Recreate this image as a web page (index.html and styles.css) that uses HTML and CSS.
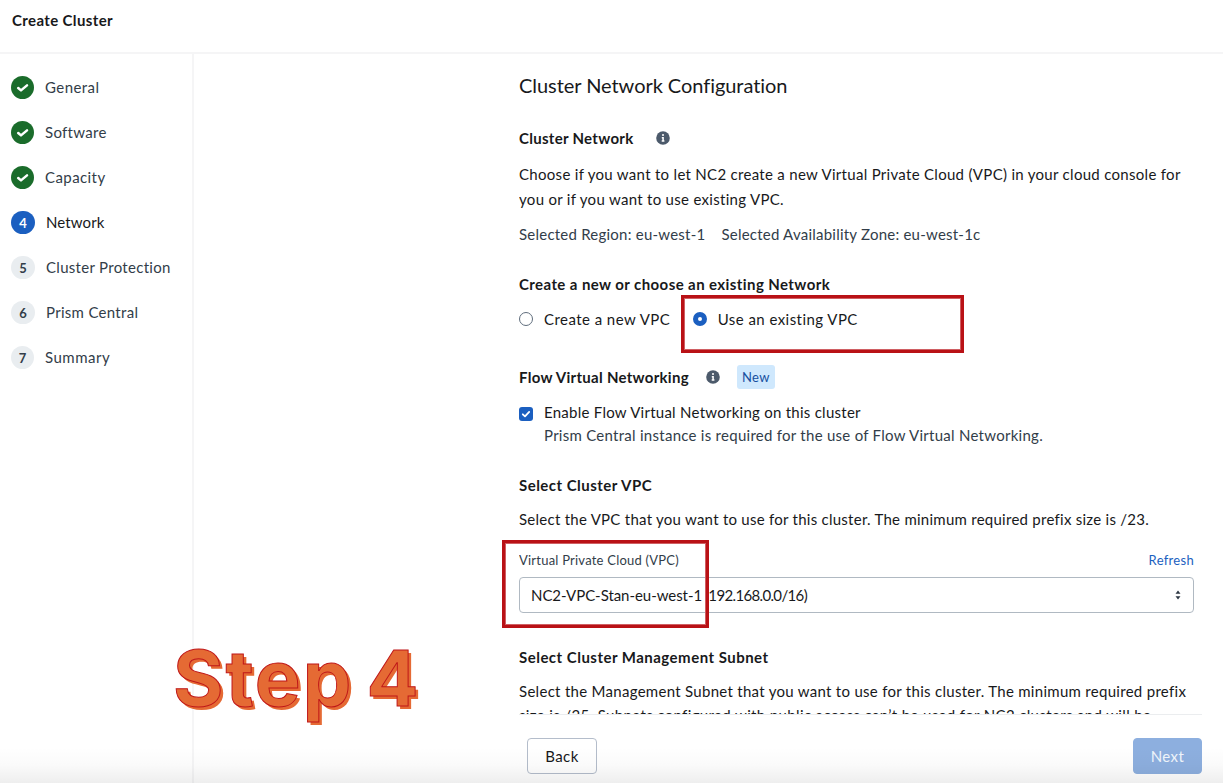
FILE: index.html
```html
<!DOCTYPE html>
<html lang="en">
<head>
<meta charset="utf-8">
<title>Create Cluster</title>
<link rel="stylesheet" href="styles.css">
</head>
<body>
<div class="app">
  <header class="topbar"><span class="t-create">Create Cluster</span></header>
  <div class="body">
    <nav class="steps">
      <div class="step"><span class="dot done"><svg width="23" height="23" viewBox="0 0 23 23"><path d="M7.2 12l2.8 2.4 6-5" fill="none" stroke="#fff" stroke-width="2.5" stroke-linecap="round" stroke-linejoin="round"/></svg></span><span class="label s1">General</span></div>
      <div class="step"><span class="dot done"><svg width="23" height="23" viewBox="0 0 23 23"><path d="M7.2 12l2.8 2.4 6-5" fill="none" stroke="#fff" stroke-width="2.5" stroke-linecap="round" stroke-linejoin="round"/></svg></span><span class="label">Software</span></div>
      <div class="step"><span class="dot done"><svg width="23" height="23" viewBox="0 0 23 23"><path d="M7.2 12l2.8 2.4 6-5" fill="none" stroke="#fff" stroke-width="2.5" stroke-linecap="round" stroke-linejoin="round"/></svg></span><span class="label s1">Capacity</span></div>
      <div class="step current"><span class="dot wide">4</span><span class="label s4">Network</span></div>
      <div class="step"><span class="dot wide">5</span><span class="label">Cluster Protection</span></div>
      <div class="step"><span class="dot wide">6</span><span class="label">Prism Central</span></div>
      <div class="step"><span class="dot">7</span><span class="label s7">Summary</span></div>
    </nav>
    <main class="main">
      <div class="scroll">
        <h1 class="title">Cluster Network Configuration</h1>
        <div class="row head-network"><h2>Cluster Network</h2>
          <svg class="info" width="14" height="14" viewBox="0 0 14 14"><circle cx="7" cy="7" r="6.8" fill="#4c5a6b"/><path d="M7 3.1v1.9M5.8 6.8H7.1v3.1M5.7 10.1h2.7" fill="none" stroke="#fff" stroke-width="1.5"/></svg>
        </div>
        <p class="intro"><span class="i1">Choose if you want to let NC2 create a new Virtual Private Cloud (VPC) in your cloud console for</span><br><span class="i2">you or if you want to use existing VPC.</span></p>
        <div class="region"><span class="r1">Selected Region: eu-west-1</span><span class="r2">Selected Availability Zone: eu-west-1c</span></div>
        <h2 class="head-choose">Create a new or choose an existing Network</h2>
        <div class="radios">
          <span class="radio"></span><span class="option">Create a new VPC</span>
          <span class="radio on"></span><span class="option">Use an existing VPC</span>
        </div>
        <div class="row head-flow"><h2>Flow Virtual Networking</h2>
          <svg class="info" width="14" height="14" viewBox="0 0 14 14"><circle cx="7" cy="7" r="6.8" fill="#4c5a6b"/><path d="M7 3.1v1.9M5.8 6.8H7.1v3.1M5.7 10.1h2.7" fill="none" stroke="#fff" stroke-width="1.5"/></svg>
          <span class="tag">New</span>
        </div>
        <div class="check">
          <svg class="box" width="14" height="14" viewBox="0 0 14 14"><rect width="14" height="14" rx="3" fill="#1b5fc0"/><path d="M3.8 7.3l2.2 2.1 4.2-4.5" fill="none" stroke="#fff" stroke-width="1.8" stroke-linecap="round" stroke-linejoin="round"/></svg>
          <div><div class="c1">Enable Flow Virtual Networking on this cluster</div><div class="c2">Prism Central instance is required for the use of Flow Virtual Networking.</div></div>
        </div>
        <h2 class="head-vpc">Select Cluster VPC</h2>
        <p class="vpc-text">Select the VPC that you want to use for this cluster. The minimum required prefix size is /23.</p>
        <div class="labels"><span class="l1">Virtual Private Cloud (VPC)</span><a class="refresh">Refresh</a></div>
        <div class="select"><span class="v1">NC2-VPC-Stan-eu-west-1</span><span class="v2">(192.168.0.0/16)</span>
          <svg class="sort" width="6" height="10" viewBox="0 0 6 10"><path d="M3 .4L5.5 3.8H.5zM3 9.6L5.5 6.2H.5z" fill="#2d3743"/></svg>
        </div>
        <h2 class="head-subnet">Select Cluster Management Subnet</h2>
        <p class="subnet"><span class="m1">Select the Management Subnet that you want to use for this cluster. The minimum required prefix</span><br><span class="m2">size is /25. Subnets configured with public access can’t be used for NC2 clusters and will be</span></p>
      </div>
      <footer class="footer"><button class="btn">Back</button><button class="btn primary">Next</button></footer>
    </main>
  </div>
  <div class="fade"></div>
  <div class="mark mark-radio"></div>
  <div class="mark mark-select"></div>
  <div class="callout">Step 4</div>
</div>
</body>
</html>
```
FILE: styles.css
```css
* { box-sizing: border-box; }
body { margin: 0; background: #fff; }
h1, h2, p { margin: 0; }
.app {
  position: relative;
  width: 1223px;
  height: 783px;
  display: flex;
  flex-direction: column;
  overflow: hidden;
  font: 400 15px/20px Lato, "Open Sans", sans-serif;
  letter-spacing: .3px;
  color: #18191b;
  white-space: nowrap;
}
.topbar { height: 54px; padding: 10px 12px; border-bottom: 2px solid #f5f5f6; font-weight: 700; letter-spacing: .37px; }
.body { flex: 1; display: flex; min-height: 0; }
.steps { width: 194px; border-right: 2px solid #f5f5f6; padding: 11px 0 0 11px; color: #323d49; }
.step { height: 45px; display: flex; align-items: center; gap: 11px; }
.label { padding-bottom: 2px; }
.s1 { letter-spacing: .42px; }
.s4 { letter-spacing: .1px; }
.s7 { letter-spacing: .5px; }
.step.current { color: #18191b; }
.dot { width: 23px; height: 23px; border-radius: 12px; background: #e9edf0; display: flex; align-items: center; justify-content: center; font-size: 13px; font-weight: 700; letter-spacing: 0; }
.dot.wide { width: 24px; }
.dot.done { background: #1a6c2b; }
.current .dot { background: #1b5fc0; color: #fff; }
.main { flex: 1; display: flex; flex-direction: column; padding: 0 21px 0 325px; }
.scroll { height: 660px; padding: 16px 8px 0 0; overflow: hidden; }
.title { font-size: 20px; line-height: 30px; font-weight: 400; letter-spacing: -.05px; }
h2 { font-size: 15px; line-height: 20px; font-weight: 700; }
.row { display: flex; align-items: center; }
.head-network { margin-top: 27px; gap: 22px; height: 22px; }
.head-network h2 { letter-spacing: .29px; }
.intro { margin-top: 13px; line-height: 24.5px; }
.region { margin-top: 13px; display: flex; gap: 16px; color: #323d49; letter-spacing: .23px; }
.head-choose { margin-top: 30px; letter-spacing: .41px; }
.radios { margin-top: 15px; display: flex; align-items: center; }
.option { letter-spacing: .45px; }
.radio { width: 14px; height: 14px; border: 1px solid #5f6d7c; border-radius: 50%; margin-right: 11px; }
.radio.on { border: 5px solid #1b5fc0; margin-left: 22.5px; }
.head-flow { margin-top: 36px; height: 24px; gap: 17px; }
.head-flow h2 { letter-spacing: .28px; }
.tag { width: 38px; height: 24px; border-radius: 3px; background: #cfe8fd; color: #17509f; font-size: 13px; line-height: 24px; text-align: center; }
.check { margin-top: 12px; display: flex; gap: 11px; line-height: 23px; }
.box { margin-top: 6px; }
.c1 { letter-spacing: .26px; }
.c2 { color: #323d49; line-height: 22px; letter-spacing: .27px; }
.head-vpc { margin-top: 29px; letter-spacing: .47px; }
.vpc-text { margin-top: 14px; letter-spacing: .26px; }
.labels { margin-top: 21px; display: flex; justify-content: space-between; font-size: 13px; color: #323d49; }
.l1 { letter-spacing: .22px; }
.refresh { color: #1b5fc0; }
.select { margin-top: 6.5px; height: 36px; border: 1px solid #b0b9c2; border-radius: 4px; display: flex; align-items: center; padding: 0 12px 0 11px; }
.v1 { width: 174px; letter-spacing: -.05px; }
.v2 { letter-spacing: -.65px; }
.sort { margin-left: auto; }
.head-subnet { margin-top: 34.5px; letter-spacing: .48px; }
.subnet { margin-top: 12px; line-height: 24px; }
.m1 { letter-spacing: .29px; }
.m2 { letter-spacing: .36px; }
.footer { height: 69px; border-top: 1px solid #ebedef; display: flex; justify-content: space-between; padding: 23px 0 0 8px; }
.btn { width: 70px; height: 36px; border: 1px solid #b4bdcb; border-radius: 4px; background: #fff; padding: 0; color: #18191b; font: 400 15px/34px Lato, sans-serif; letter-spacing: .4px; }
.btn.primary { width: 69px; background: #8dafdf; border-color: #8dafdf; color: #f1f6fc; }
.fade { position: absolute; left: 0; right: 0; bottom: 0; height: 36px; background: linear-gradient(rgba(0,0,0,0), rgba(0,0,0,.02) 50%, rgba(0,0,0,.065)); }
.mark { position: absolute; border: 3px solid #b91116; box-shadow: inset 0 0 0 1px #cf5f63; }
.mark-radio { left: 681px; top: 295px; width: 283px; height: 58px; }
.mark-select { left: 502px; top: 540px; width: 207px; height: 88px; }
.callout { position: absolute; left: 173px; top: 631px; font: 700 77px/94px Inter, sans-serif; letter-spacing: 2px; word-spacing: -7px; color: #e56a34; -webkit-text-stroke: 1px #bf1719; text-shadow: 3px 3px 0 #e56a34; }
```
